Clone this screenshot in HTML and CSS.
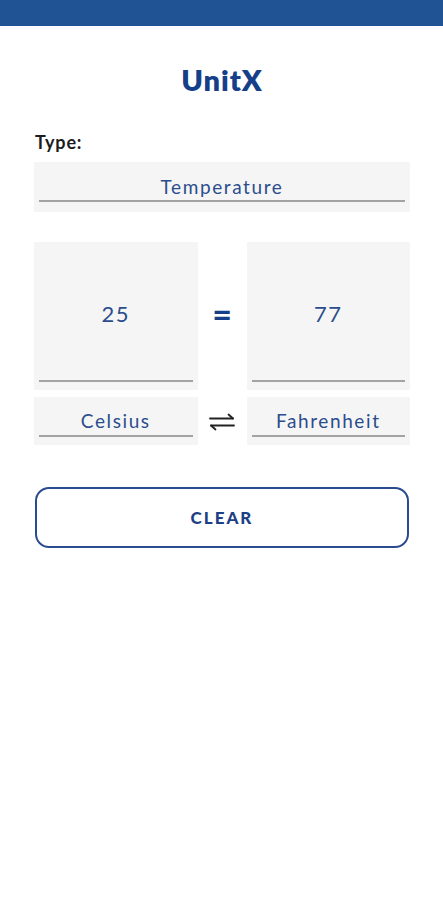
FILE: index.html
```html
<!DOCTYPE html>
<html>
<head>
<meta charset="utf-8">
<link rel="stylesheet" href="styles.css">
</head>
<body>
<div class="appbar"></div>
<main class="content">
  <h1 class="title">UnitX</h1>
  <div class="label">Type:</div>
  <div class="field type-field"><div class="field-inner">Temperature</div></div>
  <div class="converter">
    <div class="field value-field"><div class="field-inner">25</div></div>
    <div class="equals">=</div>
    <div class="field value-field"><div class="field-inner">77</div></div>
    <div class="field unit-field"><div class="field-inner">Celsius</div></div>
    <div class="swap">
      <svg width="28" height="18" viewBox="0 0 28 18" fill="none" stroke="#222" stroke-width="1.8" stroke-linecap="round" stroke-linejoin="round">
        <path d="M2 5.5H25"/><path d="M20.5 1.5L25 5.5"/>
        <path d="M26 12.5H3"/><path d="M7.5 16.5L3 12.5"/>
      </svg>
    </div>
    <div class="field unit-field"><div class="field-inner">Fahrenheit</div></div>
  </div>
  <button class="clear-btn">CLEAR</button>
</main>
</body>
</html>
```
FILE: styles.css
```css
html, body {
  margin: 0;
  padding: 0;
  background: #ffffff;
}
body {
  font-family: "Lato", "Open Sans", sans-serif;
  width: 443px;
}
.appbar {
  height: 26px;
  background: #1f5394;
}
.content {
  padding: 0 33px 0 34px;
  display: flex;
  flex-direction: column;
}
.title {
  margin: 37px 0 0;
  height: 34px;
  line-height: 34px;
  text-align: center;
  font-size: 29px;
  font-weight: 800;
  color: #163f8a;
  letter-spacing: 1px;
}
.label {
  margin-top: 35px;
  height: 20px;
  line-height: 20px;
  font-family: "Lato", sans-serif;
  font-size: 18px;
  font-weight: 700;
  letter-spacing: 0.8px;
  color: #1c1c1c;
  padding-left: 1px;
}
.field {
  background: #f5f5f5;
  padding: 0 5px;
  display: flex;
  flex-direction: column;
  box-sizing: border-box;
}
.field-inner {
  flex: 1;
  display: flex;
  align-items: center;
  justify-content: center;
  border-bottom: 2px solid #a3a3a3;
  color: #2b4d8d;
  font-size: 19px;
  letter-spacing: 1.6px;
}
.type-field {
  margin-top: 10px;
  height: 50px;
  padding-bottom: 10px;
}
.type-field .field-inner {
  padding-top: 10px;
}
.converter {
  margin-top: 30px;
  display: grid;
  grid-template-columns: 1fr 49px 1fr;
  grid-template-rows: 148px 48px;
  row-gap: 7px;
}
.value-field {
  padding-bottom: 8px;
}
.value-field .field-inner {
  font-size: 22px;
  letter-spacing: 1.5px;
  padding-top: 4px;
}
.unit-field {
  padding-bottom: 8px;
}
.unit-field .field-inner {
  padding-top: 8px;
}
.equals {
  display: flex;
  align-items: center;
  justify-content: center;
  font-size: 34px;
  font-weight: 700;
  color: #163f8a;
  padding-bottom: 6px;
}
.swap {
  display: flex;
  align-items: center;
  justify-content: center;
  padding-top: 1px;
}
.clear-btn {
  margin-top: 42px;
  height: 61px;
  margin-left: 1px;
  margin-right: 1px;
  border: 2px solid #2a4b8f;
  border-radius: 14px;
  background: #ffffff;
  color: #1d3f85;
  font-family: "Lato", sans-serif;
  font-size: 17px;
  font-weight: 900;
  letter-spacing: 2px;
  padding: 0;
}
```
